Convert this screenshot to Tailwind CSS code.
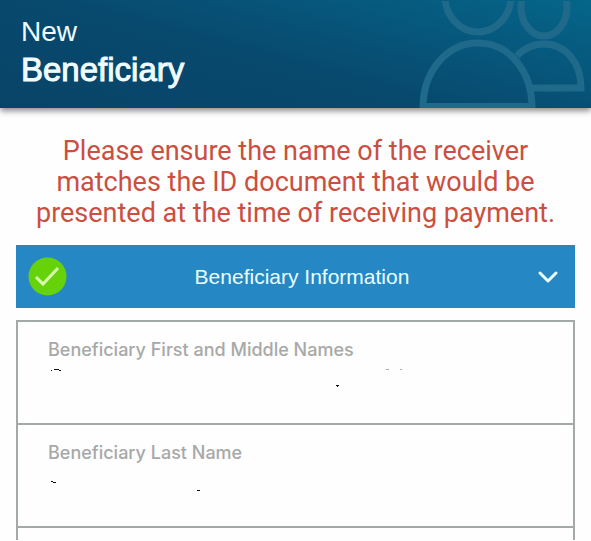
<!DOCTYPE html>
<html lang="en">

<head>
    <meta charset="UTF-8">
    <meta name="viewport" content="width=device-width, initial-scale=1.0">
    <title>New Beneficiary</title>
    <script src="https://cdn.jsdelivr.net/npm/@tailwindcss/browser@4"></script>
</head>

<body class="bg-[#fdfefd] font-['Liberation_Sans',sans-serif] h-screen overflow-hidden">
    <header class="relative overflow-hidden py-4 px-[21px] bg-linear-15 from-[#084468] via-[#08496e] via-45% to-[#04668a] shadow-[0_3px_6px_rgba(0,0,0,0.45)]">
        <svg class="absolute right-0 bottom-0 w-[200px] h-[107px]" viewBox="0 0 200 107" fill="none" stroke="#1f6a8a" stroke-width="7" aria-hidden="true">
            <ellipse cx="87" cy="-5" rx="33" ry="36" />
            <ellipse cx="153" cy="6" rx="23" ry="29" />
            <path d="M32 110C31 70 56 42 87 42S142 70 141 110M31 105.500H142" />
            <path d="M126 55C134 46 143 43 153 43C175 43 190 62 190 87H140" />
        </svg>
        <h1 class="relative text-[#f0fcff]">
            <span class="block text-[28px] leading-8">New</span>
            <span class="block text-[33px] leading-11 [-webkit-text-stroke:1px_#f0fcff]">Beneficiary</span>
        </h1>
    </header>

    <main class="px-4 pt-7">
        <p class="text-center font-['Roboto',sans-serif] text-[27px] leading-[31px] text-[#cb4f41]">
            Please ensure the name of the receiver<br>
            matches the ID document that would be<br>
            presented at the time of receiving payment.
        </p>

        <button type="button" aria-expanded="true" class="mt-4 flex w-full items-center bg-[#2588c5] py-3 pl-3 pr-4 text-[21px] text-[#eaffff]">
            <svg class="size-[39px]" viewBox="0 0 39 39" fill="none" aria-hidden="true">
                <circle cx="19.5" cy="19.5" r="19" fill="#66d30a" />
                <path d="M8 20L15 27L30 11" stroke="#d9fbb0" stroke-width="3" />
            </svg>
            <span class="flex-1">Beneficiary Information</span>
            <svg class="w-[22px] h-[14px]" viewBox="0 0 22 14" fill="none" stroke="#eaffff" stroke-width="3" stroke-linecap="round" stroke-linejoin="round" aria-hidden="true">
                <path d="M3 3L11 11L19 3" />
            </svg>
        </button>

        <form class="mt-3 divide-y-2 divide-[#a3a8a8] border-2 border-b-0 border-[#a3a8a8] font-['Inter',sans-serif]">
            <div class="relative px-[30px] pt-4 pb-[21px]">
                <label for="first-names" class="block text-[18px] leading-6 font-medium text-[#a8a8a8]">Beneficiary First and Middle Names</label>
                <input id="first-names" type="text" class="block h-10 w-full text-lg outline-none">
                <!-- masked value -->
                <svg class="absolute left-[30px] top-[43px] w-[360px] h-6 pointer-events-none" viewBox="0 0 360 24" fill="none" aria-hidden="true">
                    <path d="M3 5.500h1M6 4.500h5M11 5.500h2M288 20.500h3M289 21.500h1" stroke="#111" />
                    <path d="M338 4.500h3M352 4.500h2" stroke="#aaa" />
                </svg>
            </div>
            <div class="relative px-[30px] pt-4 pb-[21px]">
                <label for="last-name" class="block text-[18px] leading-6 font-medium text-[#a8a8a8]">Beneficiary Last Name</label>
                <input id="last-name" type="text" class="block h-10 w-full text-lg outline-none">
                <svg class="absolute left-[30px] top-[44px] w-[360px] h-6 pointer-events-none" viewBox="0 0 360 24" fill="none" aria-hidden="true">
                    <path d="M3 12.500h2M5 13.500h3M149 21.500h3" stroke="#111" />
                </svg>
            </div>
            <div class="h-3"></div>
        </form>
    </main>
</body>

</html>
